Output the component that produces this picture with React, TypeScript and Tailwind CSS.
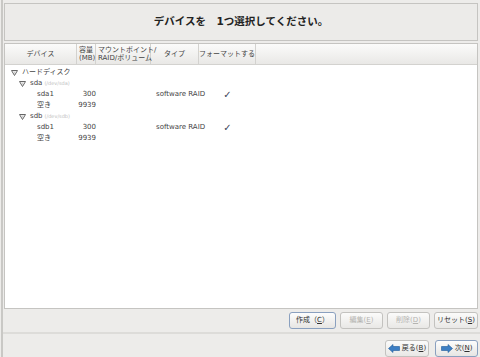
import React from "react";

const font = { fontFamily: '"DejaVu Sans", "Noto Sans CJK JP", sans-serif' };

const columns = [
  { label: "デバイス", w: "w-[72px]", center: true },
  { label: "容量\n(MB)", w: "w-[19px]", center: false },
  { label: "マウントポイント/\nRAID/ボリューム", w: "w-[55px]", center: false },
  { label: "タイプ", w: "w-[48px]", center: true },
  { label: "フォーマットする", w: "w-[57px]", center: true },
];

type Row = { indent: string; name: string; sub?: string; size?: string; type?: string; check?: boolean; arrow?: boolean };

const rows: Row[] = [
  { indent: "pl-[6px]", name: "ハードディスク", arrow: true },
  { indent: "pl-[14px]", name: "sda", sub: "(/dev/sda)", arrow: true },
  { indent: "pl-[32px]", name: "sda1", size: "300", type: "software RAID", check: true },
  { indent: "pl-[32px]", name: "空き", size: "9939" },
  { indent: "pl-[14px]", name: "sdb", sub: "(/dev/sdb)", arrow: true },
  { indent: "pl-[32px]", name: "sdb1", size: "300", type: "software RAID", check: true },
  { indent: "pl-[32px]", name: "空き", size: "9939" },
];

const Arrow = () => (
  <svg width="7" height="6" viewBox="0 0 7 6" className="mr-[4px]">
    <path d="M0.5 0.5 H6.5 L3.5 5.5 Z" fill="none" stroke="#666" strokeWidth="1" />
    <path d="M2 1.5 H5 L3.5 4 Z" fill="#ccc" />
  </svg>
);

const Btn = ({ label, disabled, active, w }: { label: React.ReactNode; disabled?: boolean; active?: boolean; w: string }) => (
  <div
    className={`${w} h-[17px] flex items-center justify-center rounded-[3px] border text-[7px] whitespace-nowrap ${
      active ? "border-[#8aa0bf] bg-gradient-to-b from-[#fdfdfd] to-[#e6e5e3]" : "border-[#c3c2bf] bg-gradient-to-b from-[#fbfbfa] to-[#e9e8e6]"
    } ${disabled ? "text-[#b5b4b1]" : "text-[#2e2e2e]"}`}
  >
    {label}
  </div>
);

const NavArrow = ({ left }: { left?: boolean }) => (
  <svg width="12" height="9" viewBox="0 0 12 9" className="mr-[2px]">
    {left ? (
      <path d="M0.5 4.5 L5 0.5 V2.5 H11.5 V6.5 H5 V8.5 Z" fill="#3d7fc4" stroke="#1f5a9a" strokeWidth="0.6" />
    ) : (
      <path d="M11.5 4.5 L7 0.5 V2.5 H0.5 V6.5 H7 V8.5 Z" fill="#3d7fc4" stroke="#1f5a9a" strokeWidth="0.6" />
    )}
  </svg>
);

export default function App() {
  return (
    <div className="w-[480px] h-[357px] bg-[#edecea] flex overflow-hidden" style={font}>
      <div className="w-[2px] bg-[#c9c8c5] ml-[1px]" />
      <div className="flex-1 flex flex-col pl-[1px] pr-[2px] pt-[3px]">
        <div className="h-[38px] border border-[#c5c4c1] bg-[#ecebe9] flex items-center justify-center text-[10.5px] font-bold text-[#222]">
          デバイスを　1つ選択してください。
        </div>
        <div className="mt-[2px] h-[266px] border border-[#c5c4c1] bg-white flex flex-col">
          <div className="h-[21px] flex bg-gradient-to-b from-[#fbfbfa] to-[#e9e8e6] border-b border-[#d3d2cf] text-[7px] text-[#444] leading-[8px]">
            {columns.map((c) => (
              <div
                key={c.label}
                className={`${c.w} shrink-0 border-r border-[#d3d2cf] flex items-center whitespace-pre ${c.center ? "justify-center" : "pl-[2px]"}`}
              >
                {c.label}
              </div>
            ))}
            <div className="flex-1" />
          </div>
          <div className="pt-[2px] text-[7px] text-[#444]">
            {rows.map((r, i) => (
              <div key={i} className="h-[11px] flex items-center whitespace-nowrap">
                <div className={`w-[72px] shrink-0 flex items-center ${r.indent}`}>
                  {r.arrow && <Arrow />}
                  <span>{r.name}</span>
                  {r.sub && <span className="ml-[2px] text-[5px] text-[#c0c0c0]">{r.sub}</span>}
                </div>
                <div className="w-[19px] shrink-0 text-right">{r.size}</div>
                <div className="w-[55px] shrink-0" />
                <div className="w-[48px] shrink-0 pl-[5px]">{r.type}</div>
                <div className="w-[57px] shrink-0 flex justify-center">
                  {r.check && <span className="text-[10px] leading-[10px] text-[#3a3f5a]">✓</span>}
                </div>
              </div>
            ))}
          </div>
        </div>
        <div className="mt-[3px] flex justify-end gap-[4px]">
          <Btn w="w-[47px]" active label={<span>作成（<u>C</u>）</span>} />
          <Btn w="w-[43px]" disabled label={<span>編集(<u>E</u>)</span>} />
          <Btn w="w-[43px]" disabled label={<span>削除(<u>D</u>)</span>} />
          <Btn w="w-[44px]" label={<span>リセット(<u>S</u>)</span>} />
        </div>
        <div className="mt-[3px] h-[2px] bg-[#dddcd9] -ml-[1px] -mr-[2px]" />
        <div className="mt-[6px] flex justify-end gap-[6px]">
          <Btn w="w-[44px]" label={<span className="flex items-center"><NavArrow left />戻る(<u>B</u>)</span>} />
          <Btn w="w-[43px]" active label={<span className="flex items-center"><NavArrow />次(<u>N</u>)</span>} />
        </div>
      </div>
    </div>
  );
}
